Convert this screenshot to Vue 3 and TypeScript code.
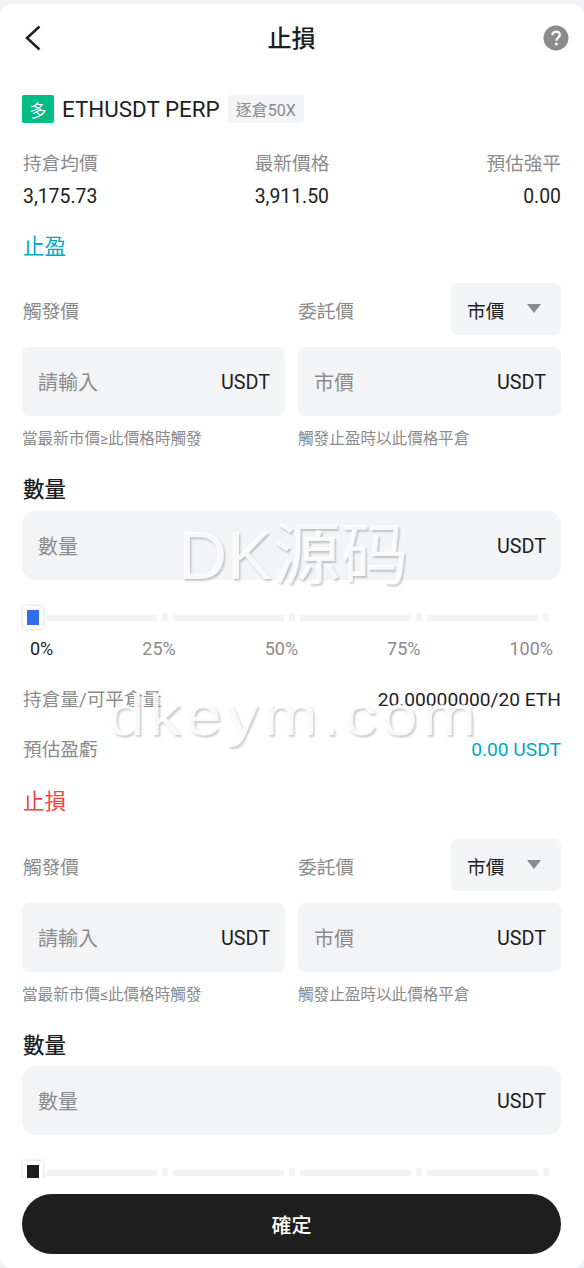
<template>
  <div class="page">
    <div class="sheet">
      <header class="top">
        <svg class="back" width="18" height="26" viewBox="0 0 18 26" fill="none">
          <path d="M15.500 1.500 3 13l12.500 11.500" stroke="#1e1e1e" stroke-width="2.500" />
        </svg>
        <h1>止損</h1>
        <svg class="help" width="26" height="26" viewBox="0 0 26 26">
          <circle cx="13" cy="13" r="12.500" fill="#8b8b8b" />
          <path d="M9.300 10.200c.2-2.300 1.700-3.600 3.800-3.600 2.200 0 3.700 1.300 3.700 3.200 0 1.500-.8 2.300-1.900 3.100-1 .7-1.400 1.200-1.400 2.400v.5" fill="none" stroke="#fff" stroke-width="2.200" />
          <circle cx="13.300" cy="19" r="1.500" fill="#fff" />
        </svg>
      </header>

      <div class="scroll">
        <div class="symbol">
          <span class="side">多</span>
          <span class="name">ETHUSDT PERP</span>
          <span class="lev">逐倉50X</span>
        </div>

        <div class="stats">
          <div v-for="s in stats" :key="s.label" class="stat">
            <span class="muted">{{ s.label }}</span>
            <b>{{ s.value }}</b>
          </div>
        </div>

        <section v-for="b in blocks" :key="b.title" class="block">
          <h2 :class="b.tone">{{ b.title }}</h2>
          <div class="cols heads">
            <span class="muted">觸發價</span>
            <div class="head-right">
              <span class="muted">委託價</span>
              <div class="select">市價<i class="caret"></i></div>
            </div>
          </div>
          <div class="cols">
            <div class="field"><span class="ph">請輸入</span><span class="unit">USDT</span></div>
            <div class="field"><span class="ph">市價</span><span class="unit">USDT</span></div>
          </div>
          <div class="cols hints">
            <span>{{ b.hint }}</span>
            <span>觸發止盈時以此價格平倉</span>
          </div>
          <h3>數量</h3>
          <div class="field big"><span class="ph">數量</span><span class="unit">USDT</span></div>
          <div class="slider">
            <span class="thumb"><i :style="{ background: b.thumb }"></i></span>
            <template v-for="n in 4" :key="n">
              <span class="seg"></span>
              <span class="tick"></span>
            </template>
          </div>
          <div class="marks">
            <span v-for="(m, i) in marks" :key="m" :class="{ on: i === 0 }">{{ m }}</span>
          </div>
          <template v-if="b.tone === 'tp'">
            <div class="line first">
              <span class="muted">持倉量/可平倉量</span>
              <span>20.00000000/20 ETH</span>
            </div>
            <div class="line">
              <span class="muted">預估盈虧</span>
              <span class="tp">0.00 USDT</span>
            </div>
          </template>
        </section>
      </div>

      <footer class="bottom">
        <button type="button">確定</button>
      </footer>

      <div class="mark mark-a">DK源码</div>
      <div class="mark mark-b">dkeym.com</div>
    </div>
  </div>
</template>

<script setup lang="ts">
type Block = { title: string; tone: "tp" | "sl"; hint: string; thumb: string };

const stats = [
  { label: "持倉均價", value: "3,175.73" },
  { label: "最新價格", value: "3,911.50" },
  { label: "預估強平", value: "0.00" },
];

const marks = ["0%", "25%", "50%", "75%", "100%"];

const blocks: Block[] = [
  { title: "止盈", tone: "tp", hint: "當最新市價≥此價格時觸發", thumb: "#2f6fed" },
  { title: "止損", tone: "sl", hint: "當最新市價≤此價格時觸發", thumb: "#1e1e1e" },
];
</script>

<style>
html,
body {
  margin: 0;
  background: #eff2f5;
}
</style>

<style scoped>
.page {
  height: 1268px;
  padding-top: 4px;
  box-sizing: border-box;
  overflow: hidden;
  font-family: Roboto, "Noto Sans CJK TC", sans-serif;
  color: #1e1e1e;
}
.sheet {
  position: relative;
  height: 1264px;
  display: flex;
  flex-direction: column;
  background: #fff;
  border-radius: 12px;
  overflow: hidden;
}
.top {
  flex: none;
  height: 68px;
  padding: 0 15px 0 24px;
  display: flex;
  align-items: center;
  justify-content: space-between;
}
.top h1 {
  margin: -3px 2px 0 0;
  font-size: 24px;
  font-weight: 500;
}
.scroll {
  flex: 1;
  min-height: 0;
  overflow: hidden;
  padding: 23px 23px 0 22px;
}
.symbol {
  display: flex;
  align-items: center;
  height: 28px;
}
.side {
  width: 32px;
  height: 28px;
  border-radius: 2px;
  background: #00bd86;
  color: #fff;
  font-size: 17px;
  display: flex;
  align-items: center;
  justify-content: center;
}
.name {
  margin-left: 8px;
  font-size: 22.4px;
}
.lev {
  margin-left: 8px;
  height: 28px;
  padding: 0 8px;
  border-radius: 3px;
  background: #f3f4f6;
  color: #8b8b8b;
  font-size: 16px;
  display: flex;
  align-items: center;
}
.stats {
  margin-top: 28px;
  margin-bottom: -2px;
  display: flex;
  justify-content: space-between;
  padding-left: 1px;
}
.stat {
  display: flex;
  flex-direction: column;
  gap: 8px;
}
.stat:last-child {
  text-align: right;
}
.stat b {
  font-weight: 400;
  font-size: 19.4px;
  line-height: 24px;
}
.muted {
  color: #8b8b8b;
  font-size: 18.67px;
  line-height: 26px;
}
.block h2 {
  margin: 25px 0 0 1px;
  font-size: 21.5px;
  font-weight: 400;
  line-height: 30px;
}
.block:last-child h2 {
  margin-top: 24px;
}
.tp {
  color: #00a8c6;
}
.sl {
  color: #f4433f;
}
.cols {
  display: grid;
  grid-template-columns: 263px 263px;
  gap: 13px;
}
.heads {
  margin-top: 21px;
  align-items: center;
}
.block:last-child .heads {
  margin-top: 22px;
}
.heads .muted {
  margin-top: 6px;
}
.heads > .muted {
  padding-left: 1px;
}
.head-right {
  display: flex;
  align-items: center;
  justify-content: space-between;
}
.select {
  width: 110px;
  height: 52px;
  box-sizing: border-box;
  padding: 0 20px 0 16px;
  border-radius: 6px;
  background: #f3f4f6;
  font-size: 18.67px;
  display: flex;
  align-items: center;
  justify-content: space-between;
}
.caret {
  border-left: 7px solid transparent;
  border-right: 7px solid transparent;
  border-top: 9px solid #8b8b8b;
  margin-top: -2px;
}
.field {
  height: 69px;
  margin-top: 12px;
  box-sizing: border-box;
  padding: 0 15px 0 16px;
  border-radius: 7px;
  background: #f3f4f6;
  display: flex;
  align-items: center;
  justify-content: space-between;
  font-size: 19.8px;
}
.unit {
  margin-top: 2px;
}
.ph {
  color: #8b8b8b;
  font-size: 20px;
}
.big {
  margin-top: 6px;
  border-radius: 14px;
}
.block:last-child .big {
  margin-top: 5px;
}
.hints {
  margin-top: 13px;
  font-size: 15.6px;
  line-height: 20px;
  color: #8b8b8b;
}
.block h3 {
  margin: 26px 0 0 1px;
  font-size: 21.5px;
  font-weight: 500;
  line-height: 30px;
}
.slider {
  margin-top: 26px;
  height: 23px;
  display: flex;
  align-items: center;
}
.thumb {
  width: 20px;
  height: 23px;
  margin-left: 1px;
  margin-right: -2px;
  box-sizing: border-box;
  padding: 4px;
  border-radius: 3px;
  background: #fff;
  box-shadow: 0 0 4px rgba(0, 0, 0, 0.18);
  flex: none;
}
.thumb i {
  display: block;
  width: 12px;
  height: 15px;
}
.seg {
  width: 111px;
  height: 6px;
  margin-left: 5px;
  background: #f3f3f3;
}
.tick {
  width: 6px;
  height: 8px;
  margin-left: 5px;
  margin-top: -2px;
  border-radius: 1px;
  background: #f3f3f3;
}
.marks {
  margin-top: 9px;
  padding: 0 8px;
  display: flex;
  justify-content: space-between;
  font-size: 18px;
  line-height: 22px;
  color: #8b8b8b;
}
.marks .on {
  color: #1e1e1e;
}
.line {
  margin-top: 24px;
  padding-left: 1px;
  display: flex;
  justify-content: space-between;
  align-items: center;
  font-size: 19.2px;
  line-height: 26px;
}
.line.first {
  margin-top: 27px;
}
.bottom {
  flex: none;
  padding: 16px 23px 14px 22px;
  background: #fff;
}
.bottom button {
  width: 100%;
  height: 60px;
  border: 0;
  border-radius: 30px;
  background: #1e1e1e;
  color: #fff;
  font: 500 20px Roboto, "Noto Sans CJK TC", sans-serif;
}
.mark {
  position: absolute;
  color: rgba(255, 255, 255, 0.88);
  font-family: "Liberation Sans", "Noto Sans CJK SC", sans-serif;
  text-shadow: 1.5px 2px 2px rgba(0, 0, 0, 0.2);
  pointer-events: none;
  white-space: nowrap;
}
.mark-a {
  left: 178px;
  top: 513px;
  font-size: 68px;
  line-height: 76px;
}
.mark-b {
  left: 108px;
  top: 673px;
  font-size: 58px;
  letter-spacing: 4px;
  line-height: 76px;
  transform: scaleX(1.12);
  transform-origin: left center;
}
</style>
